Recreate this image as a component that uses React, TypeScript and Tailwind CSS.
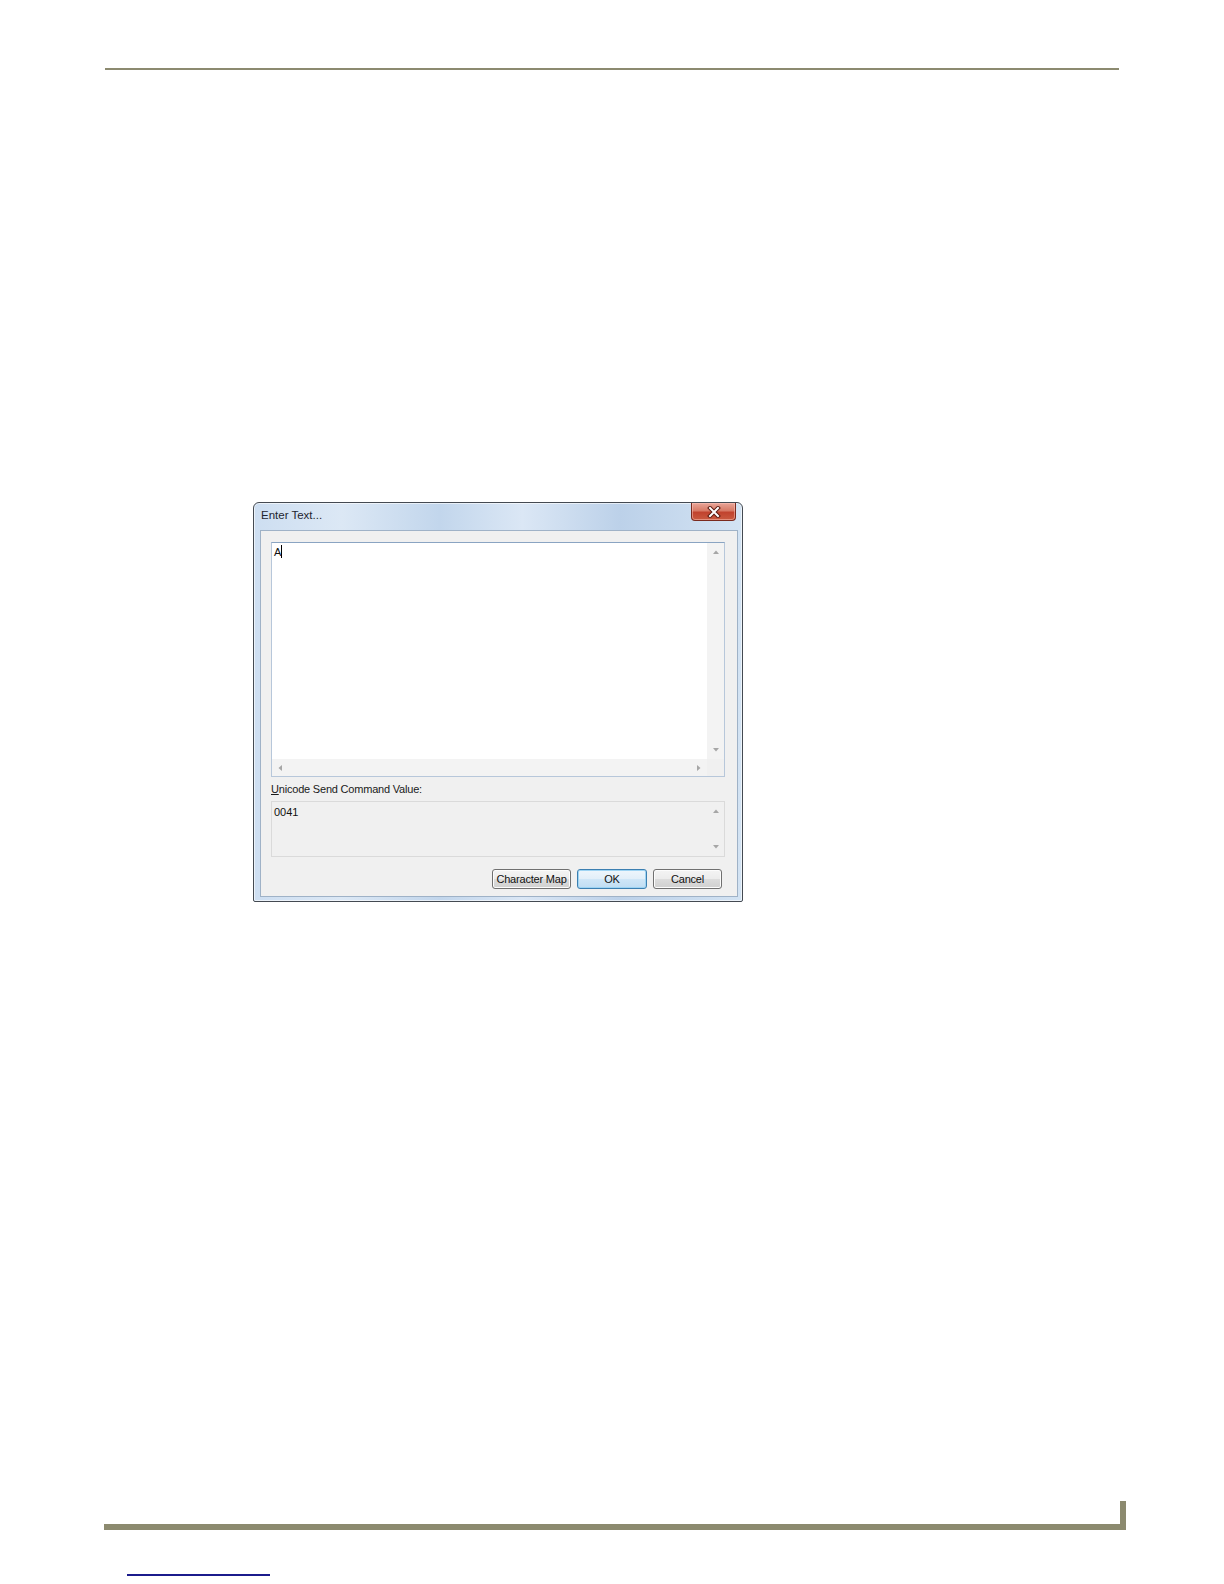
import React from "react";

const font = { fontFamily: '"Liberation Sans", Arial, sans-serif' };

function Arrow({ dir }: { dir: "up" | "down" | "left" | "right" }) {
  const pts: Record<string, string> = {
    up: "1,5 4,1.5 7,5",
    down: "1,1 4,4.5 7,1",
    left: "5,1 1.5,4 5,7",
    right: "1,1 4.5,4 1,7",
  };
  const w = dir === "up" || dir === "down" ? 8 : 6;
  const h = dir === "up" || dir === "down" ? 6 : 8;
  return (
    <svg width={w} height={h} viewBox={`0 0 ${w} ${h}`}>
      <polygon points={pts[dir]} fill="#a6a6a6" />
    </svg>
  );
}

function CloseX() {
  return (
    <svg width="14" height="12" viewBox="0 0 14 12">
      <path d="M3 2 L11 10 M11 2 L3 10" stroke="#5a1a10" strokeWidth="4" strokeLinecap="square" />
      <path d="M3 2 L11 10 M11 2 L3 10" stroke="#ffffff" strokeWidth="2" strokeLinecap="square" />
    </svg>
  );
}

export default function App() {
  return (
    <div className="relative w-[1224px] h-[1584px] bg-white overflow-hidden" style={font}>
      <div className="pt-[68px]">
        <div className="ml-[105px] w-[1014px] h-[2px] bg-[#8c8a70]" />
      </div>

      {/* Dialog */}
      <div className="ml-[253px] mt-[432px] w-[490px] h-[400px] rounded-t-[6px] rounded-b-[2px] border border-[#444a52] flex flex-col bg-[linear-gradient(to_right,#cddef1_0%,#dce8f5_18%,#c2d6ec_38%,#dbe7f5_55%,#bcd1e9_75%,#d3e3f3_100%)] shadow-[inset_0_0_0_1px_rgba(255,255,255,0.6)]">
        <div className="h-[27px] flex items-start justify-between">
          <div className="pl-[7px] pt-[7px] text-[11.5px] text-[#1e2530] leading-none">Enter Text...</div>
          <div className="mr-[6px] w-[45px] h-[18px] rounded-b-[4px] border border-t-0 border-[#7a2a1e] bg-[linear-gradient(to_bottom,#e9a598_0%,#d77a66_45%,#c1432e_55%,#c95a40_100%)] flex items-center justify-center shadow-[inset_0_0_0_1px_rgba(255,200,190,0.5)]">
            <CloseX />
          </div>
        </div>
        <div className="flex-1 ml-[6px] mr-[4px] mb-[4px] border border-[#9fb2c7] bg-[#f0f0f0] flex flex-col pl-[10px] pr-[9px] pt-[11px]">
          {/* Text area */}
          <div className="w-[454px] h-[235px] border border-[#b7c7da] border-t-[#8aa4c2] bg-white flex flex-col">
            <div className="flex flex-1">
              <div className="flex-1 pl-[2px] pt-[2px] text-[11px] text-[#111] leading-[14px] flex items-start">
                <span>A</span>
                <span className="inline-block w-px h-[13px] bg-black" />
              </div>
              <div className="w-[17px] bg-[#f3f3f3] flex flex-col items-center justify-between py-[6px]">
                <Arrow dir="up" />
                <Arrow dir="down" />
              </div>
            </div>
            <div className="h-[17px] flex">
              <div className="flex-1 bg-[#f3f3f3] flex items-center justify-between px-[5px]">
                <Arrow dir="left" />
                <Arrow dir="right" />
              </div>
              <div className="w-[17px] bg-[#f0f0f0]" />
            </div>
          </div>

          <div className="h-[24px] flex items-center text-[11px] text-[#1a1a1a] tracking-[-0.2px]">
            <span className="underline">U</span>nicode Send Command Value:
          </div>

          <div className="w-[454px] h-[56px] border border-[#dadada] bg-[#f0f0f0] flex">
            <div className="flex-1 pl-[2px] pt-[3px] text-[11px] text-[#111] leading-[14px]">0041</div>
            <div className="w-[17px] flex flex-col items-center justify-between py-[6px]">
              <Arrow dir="up" />
              <Arrow dir="down" />
            </div>
          </div>

          <div className="mt-[12px] flex justify-end gap-[6px] pr-[6px] text-[11px] text-[#111] tracking-[-0.2px]">
            <div className="w-[79px] h-[20px] rounded-[3px] border border-[#707070] bg-[linear-gradient(to_bottom,#f4f4f4_0%,#ececec_48%,#dcdcdc_52%,#d0d0d0_100%)] flex items-center justify-center shadow-[inset_0_0_0_1px_#fcfcfc]">
              Character Map
            </div>
            <div className="w-[70px] h-[20px] rounded-[3px] border border-[#3c7fb1] bg-[linear-gradient(to_bottom,#eef6fc_0%,#e2eff9_48%,#cfe6f7_52%,#c0ddf3_100%)] flex items-center justify-center shadow-[inset_0_0_0_1px_#9ed4f3]">
              OK
            </div>
            <div className="w-[69px] h-[20px] rounded-[3px] border border-[#707070] bg-[linear-gradient(to_bottom,#f4f4f4_0%,#ececec_48%,#dcdcdc_52%,#d0d0d0_100%)] flex items-center justify-center shadow-[inset_0_0_0_1px_#fcfcfc]">
              Cancel
            </div>
          </div>
        </div>
      </div>

      <div className="mt-[599px] ml-[104px] w-[1022px] h-[29px] border-b-[6px] border-r-[6px] border-[#8c8a6f]" />
      <div className="mt-[44px] ml-[127px] w-[143px] h-[2px] bg-[#1b1b8c]" />
    </div>
  );
}
